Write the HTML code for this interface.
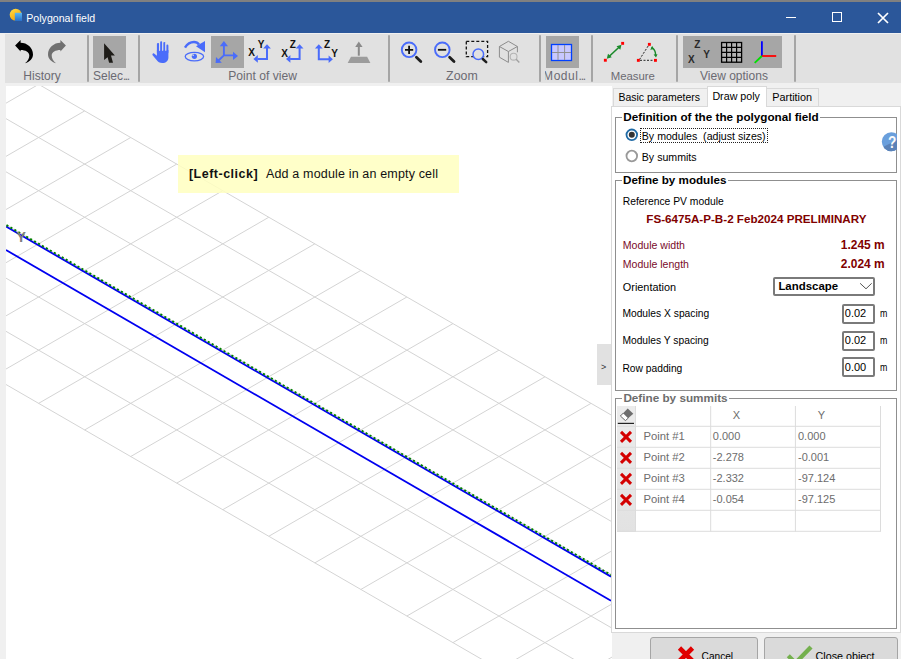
<!DOCTYPE html><html><head><meta charset="utf-8"><style>
*{margin:0;padding:0;box-sizing:border-box}
html,body{width:901px;height:659px;overflow:hidden;background:#f0f0f0;font-family:"Liberation Sans",sans-serif;font-size:12px;color:#000}
.a{position:absolute}
.t{position:absolute;white-space:pre;line-height:1}
svg{position:absolute;overflow:visible}
</style></head><body>
<div class="a" style="left:0;top:0;width:901px;height:2px;background:#808080"></div>
<div class="a" style="left:0;top:2px;width:901px;height:31px;background:#2b579a"></div>
<svg style="left:0;top:0" width="901" height="33">
<defs><linearGradient id="sun" x1="0" y1="0" x2="0.6" y2="1"><stop offset="0" stop-color="#ffe14a"/><stop offset="1" stop-color="#f7a000"/></linearGradient>
<linearGradient id="pv" x1="0" y1="0" x2="0" y2="1"><stop offset="0" stop-color="#5ab8f0"/><stop offset="1" stop-color="#2a70c8"/></linearGradient></defs>
<circle cx="15.7" cy="14.7" r="6" fill="url(#sun)"/>
<rect x="14.8" y="12.8" width="7.2" height="8.2" fill="url(#pv)"/>
<line x1="786" y1="17.5" x2="796" y2="17.5" stroke="#fff" stroke-width="1"/>
<rect x="832.5" y="12.5" width="9" height="9" fill="none" stroke="#fff" stroke-width="1"/>
<path d="M878,13 L888,23 M888,13 L878,23" stroke="#fff" stroke-width="1.7"/>
</svg>
<div class="t" style="left:26.30px;top:13px;font-size:10.6px;color:#fff;">Polygonal field</div>
<div class="a" style="left:0;top:33px;width:901px;height:53px;background:#f0f0f0"></div>
<div class="a" style="left:5px;top:34px;width:896px;height:48.5px;background:#e1e1e1"></div>
<div class="a" style="left:86.5px;top:35px;width:2px;height:47px;background:#a5a5a5;border-radius:1px"></div>
<div class="a" style="left:138px;top:35px;width:2px;height:47px;background:#a5a5a5;border-radius:1px"></div>
<div class="a" style="left:388.2px;top:35px;width:2px;height:47px;background:#a5a5a5;border-radius:1px"></div>
<div class="a" style="left:539px;top:35px;width:2px;height:47px;background:#a5a5a5;border-radius:1px"></div>
<div class="a" style="left:591.3px;top:35px;width:2px;height:47px;background:#a5a5a5;border-radius:1px"></div>
<div class="a" style="left:676px;top:35px;width:2px;height:47px;background:#a5a5a5;border-radius:1px"></div>
<div class="a" style="left:794.3px;top:35px;width:2px;height:47px;background:#a5a5a5;border-radius:1px"></div>
<div class="a" style="left:93px;top:36px;width:33px;height:31.8px;background:#a6a6a6"></div>
<div class="a" style="left:211px;top:36px;width:33px;height:31.8px;background:#a6a6a6"></div>
<div class="a" style="left:546px;top:36px;width:33px;height:31.8px;background:#a6a6a6"></div>
<div class="a" style="left:683px;top:36px;width:99px;height:31.8px;background:#a6a6a6"></div>
<div class="t" style="left:23.30px;top:70px;font-size:12.05px;color:#6b6a72;">History</div>
<div class="t" style="left:93.00px;top:70px;font-size:12.0px;color:#6b6a72;">Selec<span style="letter-spacing:-1.5px">...</span></div>
<div class="t" style="left:228.30px;top:70px;font-size:12.1px;color:#6b6a72;">Point of view</div>
<div class="t" style="left:446.10px;top:70px;font-size:12.36px;color:#6b6a72;">Zoom</div>
<div class="a" style="left:544.7px;top:66px;width:46px;height:17px;overflow:hidden"><div class="t" style="left:-1.6px;top:4px;font-size:12px;color:#6b6a72;letter-spacing:0.55px">Modul<span style="letter-spacing:-1.2px">...</span></div></div>
<div class="t" style="left:610.70px;top:71px;font-size:11.36px;color:#6b6a72;">Measure</div>
<div class="t" style="left:700.00px;top:70px;font-size:12.03px;color:#6b6a72;">View options</div>
<svg style="left:0;top:0" width="901" height="90">
<path d="M15.1,45.6 L20.6,39.9 L20.6,42.7 C27,42.7 33,47.5 33,54.5 C33,58.5 29.5,62 25,63.3 C28,61 29.3,58 29.3,55.5 C29.3,52 25.5,49.9 20.6,49.9 L20.6,51.6 Z" fill="#000"/>
<path transform="translate(81,0) scale(-1,1)" d="M15.1,45.6 L20.6,39.9 L20.6,42.7 C27,42.7 33,47.5 33,54.5 C33,58.5 29.5,62 25,63.3 C28,61 29.3,58 29.3,55.5 C29.3,52 25.5,49.9 20.6,49.9 L20.6,51.6 Z" fill="#707070"/>
<path d="M104.1,43.3 L114.9,55.6 L111,55.6 L113,62.7 L109.1,62.7 L107.6,57.3 L104.1,60 Z" fill="#1e1c18"/>
<!-- hand -->
<g fill="#4a6cfa">
<rect x="156.9" y="42.9" width="2.3" height="11" rx="1.1"/>
<rect x="160.1" y="41.3" width="2.2" height="11" rx="1.1"/>
<rect x="163.2" y="42" width="2.2" height="11" rx="1.1"/>
<rect x="166.2" y="44.6" width="2.2" height="9" rx="1.1"/>
<path d="M156.9,50 L168.4,50 L168.4,57.5 C168.4,61 166,63 162.3,63 C159.5,63 158,61.8 156.6,60 L152.6,55.2 C152,54.2 152.9,52.8 154.1,53.4 L156.9,55.8 Z"/>
</g>
<path d="M159.6,42 V51 M162.7,41 V51 M165.8,43 V51" stroke="#e1e1e1" stroke-width="0.9"/>
<!-- eye -->
<path d="M185,47.6 C187.5,43.5 191,42 194,42 C196.5,42 198,43 199,44.5" fill="none" stroke="#4a6cfa" stroke-width="2.4"/>
<path d="M196,46.3 L205,41 L205,52.2 Z" fill="#4a6cfa"/>
<ellipse cx="194.4" cy="56.6" rx="9.2" ry="4.2" fill="none" stroke="#4a6cfa" stroke-width="1.3"/>
<circle cx="194.4" cy="56.3" r="2.6" fill="#4a6cfa"/><circle cx="193.2" cy="55.2" r="0.8" fill="#e1e1e1"/>
<!-- axes -->
<g stroke="#4a6cfa" stroke-width="1.9" fill="none"><path d="M223.9,55.4 V45.5 M223.9,55.4 H233.5 M223.9,55.4 L218,61"/></g>
<g fill="#4a6cfa"><path d="M223.9,41 L219.8,46.2 L228,46.2 Z"/><path d="M238,56 L233,51.8 L233,60 Z"/><path d="M215.6,63 L216,57 L221.8,62.8 Z"/></g>

<g transform="translate(0,0)"><path d="M267,48 V58.9 H257.5" fill="none" stroke="#4a6cfa" stroke-width="2"/><path d="M267,44.3 L263.1,48.6 L270.9,48.6 Z" fill="#4a6cfa"/><path d="M253.4,58.9 L257.8,55.1 L257.8,62.7 Z" fill="#4a6cfa"/></g><g transform="translate(32.6,0)"><path d="M267,48 V58.9 H257.5" fill="none" stroke="#4a6cfa" stroke-width="2"/><path d="M267,44.3 L263.1,48.6 L270.9,48.6 Z" fill="#4a6cfa"/><path d="M253.4,58.9 L257.8,55.1 L257.8,62.7 Z" fill="#4a6cfa"/></g></svg>
<svg style="left:0;top:0" width="901" height="90">
<path d="M318.8,48 V59.3 H329" fill="none" stroke="#4a6cfa" stroke-width="2"/>
<path d="M318.8,44.2 L314.9,48.5 L322.7,48.5 Z" fill="#4a6cfa"/><path d="M332.9,59.3 L328.6,55.5 L328.6,63.1 Z" fill="#4a6cfa"/>
<!-- ground -->
<path d="M358.8,55.7 V46.5" stroke="#8a8a8a" stroke-width="2"/>
<path d="M358.8,41.5 L355.2,47 L362.6,47 Z" fill="#8a8a8a"/>
<path d="M351,56.8 L367.1,56.8 L370.4,63.1 L347.7,63.1 Z" fill="#9c9c9c"/>
<!-- zoom+ -->
<circle cx="409.1" cy="49.8" r="7.3" fill="none" stroke="#4a6cfa" stroke-width="1.9"/>
<path d="M405,49.8 H413.2 M409.1,45.7 V53.9" stroke="#111" stroke-width="1.8"/>
<path d="M416.4,57.2 L420.8,61.5" stroke="#1e1e1e" stroke-width="2.8" stroke-linecap="round"/>
<circle cx="442.3" cy="49.8" r="7.3" fill="none" stroke="#4a6cfa" stroke-width="1.9"/>
<path d="M437.9,49.8 H446.2" stroke="#111" stroke-width="1.8"/>
<path d="M449.6,57.2 L454,61.5" stroke="#1e1e1e" stroke-width="2.8" stroke-linecap="round"/>
<!-- zoom box -->
<rect x="466.3" y="41.3" width="21.3" height="15.3" fill="none" stroke="#111" stroke-width="1.3" stroke-dasharray="3,2"/>
<circle cx="478.3" cy="54.3" r="5.3" fill="#e1e1e1" stroke="#4a6cfa" stroke-width="1.5"/>
<path d="M482.8,59 L486.2,62.2" stroke="#1e1e1e" stroke-width="2.5" stroke-linecap="round"/>
<!-- cube -->
<path d="M508.4,41.3 L499.4,46.5 L499.4,57.2 L508.4,62.4 M508.4,41.3 L517.4,46.5 L517.4,52.3 M499.4,46.5 L508.4,51.5 L517.4,46.5 M508.4,51.5 V62.4" fill="none" stroke="#8c8c8c" stroke-width="1"/>
<circle cx="513.6" cy="56.7" r="3.4" fill="#e1e1e1" stroke="#b4b4b4" stroke-width="1.1"/>
<path d="M516.2,59.3 L519.3,62.4" stroke="#a0a0a0" stroke-width="1.4"/>
<!-- module grid -->
<rect x="551.5" y="44.5" width="20" height="16" fill="#c8c8ff" stroke="#0040ff" stroke-width="1.3"/>
<path d="M558,45 V60 M564.6,45 V60 M552,52.5 H571" stroke="#909090" stroke-width="1"/>
<!-- measure -->
<path d="M608.5,57 L619.8,46.5" stroke="#1a8a2a" stroke-width="1.6"/>
<path d="M606.8,58.8 L608,53.8 L611.8,57.3 Z M621.5,44.8 L620.3,49.8 L616.5,46.3 Z" fill="#1a8a2a"/>
<rect x="621.2" y="41.9" width="2.9" height="2.9" fill="#f00"/>
<rect x="603.9" y="58.8" width="2.9" height="2.9" fill="#f00"/>
<path d="M639.5,59.5 L648.5,45.5 M640,60.3 H654.5" stroke="#222" stroke-width="1" stroke-dasharray="2,1.5"/>
<path d="M651.5,47 C654,49 656,52 655.5,55.5" fill="none" stroke="#1a8a2a" stroke-width="1.4"/>
<path d="M652.3,46 L650.2,49.8 L653.8,49.3 Z M656,57.5 L653.6,54.5 L657.5,54.3 Z" fill="#1a8a2a"/>
<rect x="647.9" y="42.9" width="2.9" height="2.9" fill="#f00"/>
<rect x="636.9" y="58.9" width="2.9" height="2.9" fill="#f00"/>
<rect x="654" y="58.9" width="2.9" height="2.9" fill="#f00"/>
<!-- view options grid -->
<rect x="721.6" y="42.5" width="20" height="19.7" fill="#b4b4b4" stroke="#000" stroke-width="1.3"/>
<path d="M726.6,42.5 V62.2 M731.6,42.5 V62.2 M736.6,42.5 V62.2 M721.6,47.4 H741.6 M721.6,52.3 H741.6 M721.6,57.3 H741.6" stroke="#000" stroke-width="1.2"/>
<path d="M761.9,56 V41.2" stroke="#0000ff" stroke-width="1.8"/>
<path d="M761.9,56 H776.2" stroke="#ff0000" stroke-width="1.8"/>
<path d="M761.9,56 L754.7,62.9" stroke="#00e000" stroke-width="1.8"/>
</svg>
<div class="t" style="left:248.36px;top:48px;font-size:10.0px;color:#111;font-weight:bold;">X</div>
<div class="t" style="left:257.87px;top:40px;font-size:10.0px;color:#111;font-weight:bold;">Y</div>
<div class="t" style="left:281.37px;top:49px;font-size:10.0px;color:#111;font-weight:bold;">X</div>
<div class="t" style="left:289.84px;top:40px;font-size:10.0px;color:#111;font-weight:bold;">Z</div>
<div class="t" style="left:324.05px;top:40px;font-size:10.0px;color:#111;font-weight:bold;">Z</div>
<div class="t" style="left:331.37px;top:49px;font-size:10.0px;color:#111;font-weight:bold;">Y</div>
<div class="t" style="left:694.15px;top:40px;font-size:10.0px;color:#2a2a2a;font-weight:bold;">Z</div>
<div class="t" style="left:703.37px;top:50px;font-size:10.0px;color:#2a2a2a;font-weight:bold;">Y</div>
<div class="t" style="left:687.96px;top:55px;font-size:10.0px;color:#2a2a2a;font-weight:bold;">X</div>
<div class="a" style="left:6px;top:86px;width:606px;height:573px;background:#fff;overflow:hidden">
<svg style="left:0;top:0" width="606" height="573">
<path d="M-381.65,-240.94L1229.47,689.54M-427.68,-214.35L1183.44,716.12M-473.71,-187.76L1137.41,742.71M-519.75,-161.18L1091.37,769.29M-565.78,-134.59L1045.34,795.88M-611.81,-108.01L999.31,822.47M-657.84,-81.42L953.28,849.05M-289.59,-187.76L-565.78,-28.25M-243.55,-161.18L-519.75,-1.67M-197.52,-134.59L-473.71,24.92M-151.49,-108.01L-427.68,51.50M-105.46,-81.42L-381.65,78.09M-59.43,-54.84L-335.62,104.67M-13.39,-28.25L-289.59,131.25M32.64,-1.67L-243.55,157.84M78.67,24.92L-197.52,184.43M124.70,51.50L-151.49,211.01M170.73,78.09L-105.46,237.60M216.77,104.67L-59.43,264.18M262.80,131.25L-13.39,290.77M308.83,157.84L32.64,317.35M354.86,184.43L78.67,343.94M400.89,211.01L124.70,370.52M446.93,237.60L170.73,397.11M492.96,264.18L216.77,423.69M538.99,290.77L262.80,450.27M585.02,317.35L308.83,476.86M631.05,343.94L354.86,503.45M677.09,370.52L400.89,530.03M723.12,397.11L446.93,556.62M769.15,423.69L492.96,583.20M815.18,450.27L538.99,609.78M861.21,476.86L585.02,636.37M907.25,503.45L631.05,662.95M953.28,530.03L677.09,689.54M999.31,556.62L723.12,716.12M1045.34,583.20L769.15,742.71M1091.37,609.78L815.18,769.29M1137.41,636.37L861.21,795.88M1183.44,662.95L907.25,822.47M1229.47,689.54L953.28,849.05" stroke="#d4d4d4" stroke-width="1" fill="none"/>
<path d="M0,140.50 L605,490.60" stroke="#0000f0" stroke-width="1.8"/>
<path d="M0,164.00 L605,514.70" stroke="#0000f0" stroke-width="1.8"/>
<path d="M0.5,139.10 L605.5,489.20" stroke="#008000" stroke-width="1.9" stroke-dasharray="2.1,2.46"/>
</svg>
<div class="a" style="left:171.7px;top:69px;width:281.6px;height:37.7px;background:rgba(255,255,192,0.85)"></div>
</div>
<div class="t" style="left:16.20px;top:230px;font-size:14.5px;color:#7f7f7f;font-weight:bold;">Y</div>
<div class="t" style="left:188.90px;top:168px;font-size:12.5px;color:#111;font-weight:bold;letter-spacing:0.5px;">[Left-click]</div>
<div class="t" style="left:266.00px;top:168px;font-size:12.5px;color:#111;letter-spacing:0.16px;">Add a module in an empty cell</div>
<div class="a" style="left:597px;top:344px;width:14px;height:41px;background:#e1e1e1"></div>
<div class="t" style="left:601.00px;top:363px;font-size:9px;color:#333;">&gt;</div>
<div class="a" style="left:611px;top:106px;width:290px;height:527px;background:#fff;border:1px solid #d9d9d9"></div>
<div class="a" style="left:613px;top:88px;width:95px;height:19px;background:#f0f0f0;border:1px solid #d9d9d9"></div>
<div class="a" style="left:766px;top:88px;width:53px;height:19px;background:#f0f0f0;border:1px solid #d9d9d9"></div>
<div class="a" style="left:707px;top:86px;width:60px;height:21px;background:#fff;border:1px solid #d9d9d9;border-bottom:none"></div>
<div class="t" style="left:618.40px;top:93px;font-size:10.49px;color:#000;">Basic parameters</div>
<div class="t" style="left:712.40px;top:91px;font-size:10.71px;color:#000;">Draw poly</div>
<div class="t" style="left:772.30px;top:92px;font-size:10.85px;color:#000;">Partition</div>
<div class="a" style="left:615px;top:117px;width:282px;height:56px;border:1px solid #8f8f8f"></div>
<div class="a" style="left:615px;top:180px;width:282px;height:211px;border:1px solid #8f8f8f"></div>
<div class="a" style="left:615px;top:398px;width:282px;height:231px;border:1px solid #8f8f8f"></div>
<div class="a" style="left:621.8px;top:112px;width:198.7px;height:12px;background:#fff"></div>
<div class="t" style="left:623.30px;top:111px;font-size:11.7px;color:#000;font-weight:bold;">Definition of the the polygonal field</div>
<div class="a" style="left:621.5px;top:175px;width:106.4px;height:12px;background:#fff"></div>
<div class="t" style="left:623.00px;top:174px;font-size:11.63px;color:#000;font-weight:bold;">Define by modules</div>
<div class="a" style="left:621.9px;top:393px;width:107.2px;height:12px;background:#fff"></div>
<div class="t" style="left:623.40px;top:392px;font-size:11.72px;color:#6d6d6d;font-weight:bold;">Define by summits</div>
<svg style="left:0;top:0" width="901" height="659">
<circle cx="631.8" cy="134.8" r="5.3" fill="#fff" stroke="#1f6aa5" stroke-width="1.8"/>
<circle cx="631.8" cy="134.8" r="3" fill="#333"/>
<circle cx="631.8" cy="156" r="5.3" fill="#fff" stroke="#999" stroke-width="1.8"/>

<defs><clipPath id="gc"><rect x="0" y="0" width="897" height="659"/></clipPath></defs>
<g clip-path="url(#gc)">
<clipPath id="hc"><circle cx="891.3" cy="141.7" r="9.5"/></clipPath>
<circle cx="891.3" cy="141.7" r="9.5" fill="#6a9fdc"/>
<path clip-path="url(#hc)" d="M880,148.9 L884,146.4 L898,139.4 L898,155 L880,155 Z" fill="#5a82b8"/>
</g>
</svg>
<div class="a" style="left:640px;top:128px;width:128px;height:15px;border:1px dotted #222"></div>
<div class="t" style="left:641.80px;top:131px;font-size:10.61px;color:#000;">By modules  (adjust sizes)</div>
<div class="t" style="left:641.80px;top:152px;font-size:10.61px;color:#000;">By summits</div>
<div class="t" style="left:888.20px;top:134px;font-size:17px;color:#fafafa;font-weight:bold;transform:scaleX(0.8);transform-origin:0 0;">?</div>
<div class="t" style="left:622.70px;top:197px;font-size:10.34px;color:#000;">Reference PV module</div>
<div class="t" style="left:646.30px;top:213px;font-size:11.65px;color:#800000;font-weight:bold;">FS-6475A-P-B-2 Feb2024 PRELIMINARY</div>
<div class="t" style="left:622.80px;top:240px;font-size:10.56px;color:#7a0b2a;">Module width</div>
<div class="t" style="left:622.80px;top:259px;font-size:10.54px;color:#7a0b2a;">Module length</div>
<div class="t" style="left:622.80px;top:282px;font-size:10.88px;color:#000;">Orientation</div>
<div class="t" style="right:16.40px;top:240px;font-size:11.94px;color:#800000;font-weight:bold;">1.245 m</div>
<div class="t" style="right:16.40px;top:259px;font-size:11.94px;color:#800000;font-weight:bold;">2.024 m</div>
<div class="a" style="left:773.2px;top:276.7px;width:102.2px;height:19.3px;border:2px solid #7a7a7a;border-radius:2px;background:#fff"></div>
<svg style="left:0;top:0" width="901" height="659"><path d="M860.1,283.3 L866,288.8 L871.7,283.3" fill="none" stroke="#555" stroke-width="1"/></svg>
<div class="t" style="left:778.40px;top:281px;font-size:11.43px;color:#000;font-weight:bold;">Landscape</div>
<div class="a" style="left:842.4px;top:303.5px;width:33px;height:20px;border:2px solid #7a7a7a;border-radius:2px;background:#fff"></div>
<div class="t" style="left:844.80px;top:308px;font-size:11.0px;color:#000;">0.02</div>
<div class="t" style="left:879.70px;top:308px;font-size:11px;color:#000;transform:scaleX(0.8);transform-origin:0 0;">m</div>
<div class="t" style="left:622.40px;top:309px;font-size:10.28px;color:#000;">Modules X spacing</div>
<div class="a" style="left:842.4px;top:330.5px;width:33px;height:20px;border:2px solid #7a7a7a;border-radius:2px;background:#fff"></div>
<div class="t" style="left:844.80px;top:335px;font-size:11.0px;color:#000;">0.02</div>
<div class="t" style="left:879.70px;top:335px;font-size:11px;color:#000;transform:scaleX(0.8);transform-origin:0 0;">m</div>
<div class="t" style="left:622.40px;top:336px;font-size:10.28px;color:#000;">Modules Y spacing</div>
<div class="a" style="left:842.4px;top:357.4px;width:33px;height:20px;border:2px solid #7a7a7a;border-radius:2px;background:#fff"></div>
<div class="t" style="left:844.80px;top:362px;font-size:11.0px;color:#000;">0.00</div>
<div class="t" style="left:879.70px;top:362px;font-size:11px;color:#000;transform:scaleX(0.8);transform-origin:0 0;">m</div>
<div class="t" style="left:622.40px;top:364px;font-size:10.28px;color:#000;">Row padding</div>
<div class="a" style="left:617px;top:406px;width:19px;height:126px;background:linear-gradient(#ececec,#e2e2e2)"></div>
<svg style="left:0;top:0" width="901" height="659"><path d="M617,426.3 H881 M617,447.3 H881 M617,468.3 H881 M617,489.3 H881 M617,510.3 H881 M617,531.3 H881 M635.5,406 V531.5 M710.7,406 V531.5 M795.4,406 V531.5 M880.5,406 V531.5" stroke="#dcdcdc" stroke-width="1" fill="none"/>
<path d="M627.7,408.4 L633.3,413.8 L625.4,420.6 L620.4,416 Z" fill="#6e6e6e"/><path d="M620.4,416 L623.4,413 L628.4,418 L625.4,420.6 Z" fill="#fff" stroke="#555" stroke-width="0.8"/><path d="M617.8,423.4 H634" stroke="#222" stroke-width="1.2"/>
<path d="M621,431.9 L631,441.9 M631,431.9 L621,441.9" stroke="#d40000" stroke-width="3"/>
<path d="M621,452.9 L631,462.9 M631,452.9 L621,462.9" stroke="#d40000" stroke-width="3"/>
<path d="M621,473.9 L631,483.9 M631,473.9 L621,483.9" stroke="#d40000" stroke-width="3"/>
<path d="M621,494.9 L631,504.9 M631,494.9 L621,504.9" stroke="#d40000" stroke-width="3"/>
</svg>
<div class="t" style="left:636.30px;width:200px;text-align:center;top:410px;font-size:11px;color:#6d6d6d;">X</div>
<div class="t" style="left:721.30px;width:200px;text-align:center;top:410px;font-size:11px;color:#6d6d6d;">Y</div>
<div class="t" style="left:643.40px;top:431px;font-size:11.28px;color:#6d6d6d;">Point #1</div>
<div class="t" style="left:712.80px;top:431px;font-size:11.0px;color:#6d6d6d;">0.000</div>
<div class="t" style="left:798.00px;top:431px;font-size:11.0px;color:#6d6d6d;">0.000</div>
<div class="t" style="left:643.40px;top:452px;font-size:11.28px;color:#6d6d6d;">Point #2</div>
<div class="t" style="left:712.80px;top:452px;font-size:11.0px;color:#6d6d6d;">-2.278</div>
<div class="t" style="left:798.00px;top:452px;font-size:11.0px;color:#6d6d6d;">-0.001</div>
<div class="t" style="left:643.40px;top:473px;font-size:11.28px;color:#6d6d6d;">Point #3</div>
<div class="t" style="left:712.80px;top:473px;font-size:11.0px;color:#6d6d6d;">-2.332</div>
<div class="t" style="left:798.00px;top:473px;font-size:11.0px;color:#6d6d6d;">-97.124</div>
<div class="t" style="left:643.40px;top:494px;font-size:11.28px;color:#6d6d6d;">Point #4</div>
<div class="t" style="left:712.80px;top:494px;font-size:11.0px;color:#6d6d6d;">-0.054</div>
<div class="t" style="left:798.00px;top:494px;font-size:11.0px;color:#6d6d6d;">-97.125</div>
<div class="a" style="left:649.7px;top:637.3px;width:108px;height:40px;background:#dadada;border:1px solid #a5a5a5;border-radius:3px"></div>
<div class="a" style="left:764.4px;top:637px;width:133.3px;height:40px;background:#dadada;border:1px solid #a5a5a5;border-radius:3px"></div>
<svg style="left:0;top:0" width="901" height="659"><path d="M679.5,648 L692.5,661 M692.5,648 L679.5,661" stroke="#e00000" stroke-width="4.6"/><path d="M788.3,655.8 L795.5,663 L811,647" fill="none" stroke="#74b04e" stroke-width="4.3"/></svg>
<div class="t" style="left:701.60px;top:652px;font-size:10.15px;color:#000;">Cancel</div>
<div class="t" style="left:815.60px;top:651px;font-size:10.72px;color:#000;">Close object</div>
</body></html>
